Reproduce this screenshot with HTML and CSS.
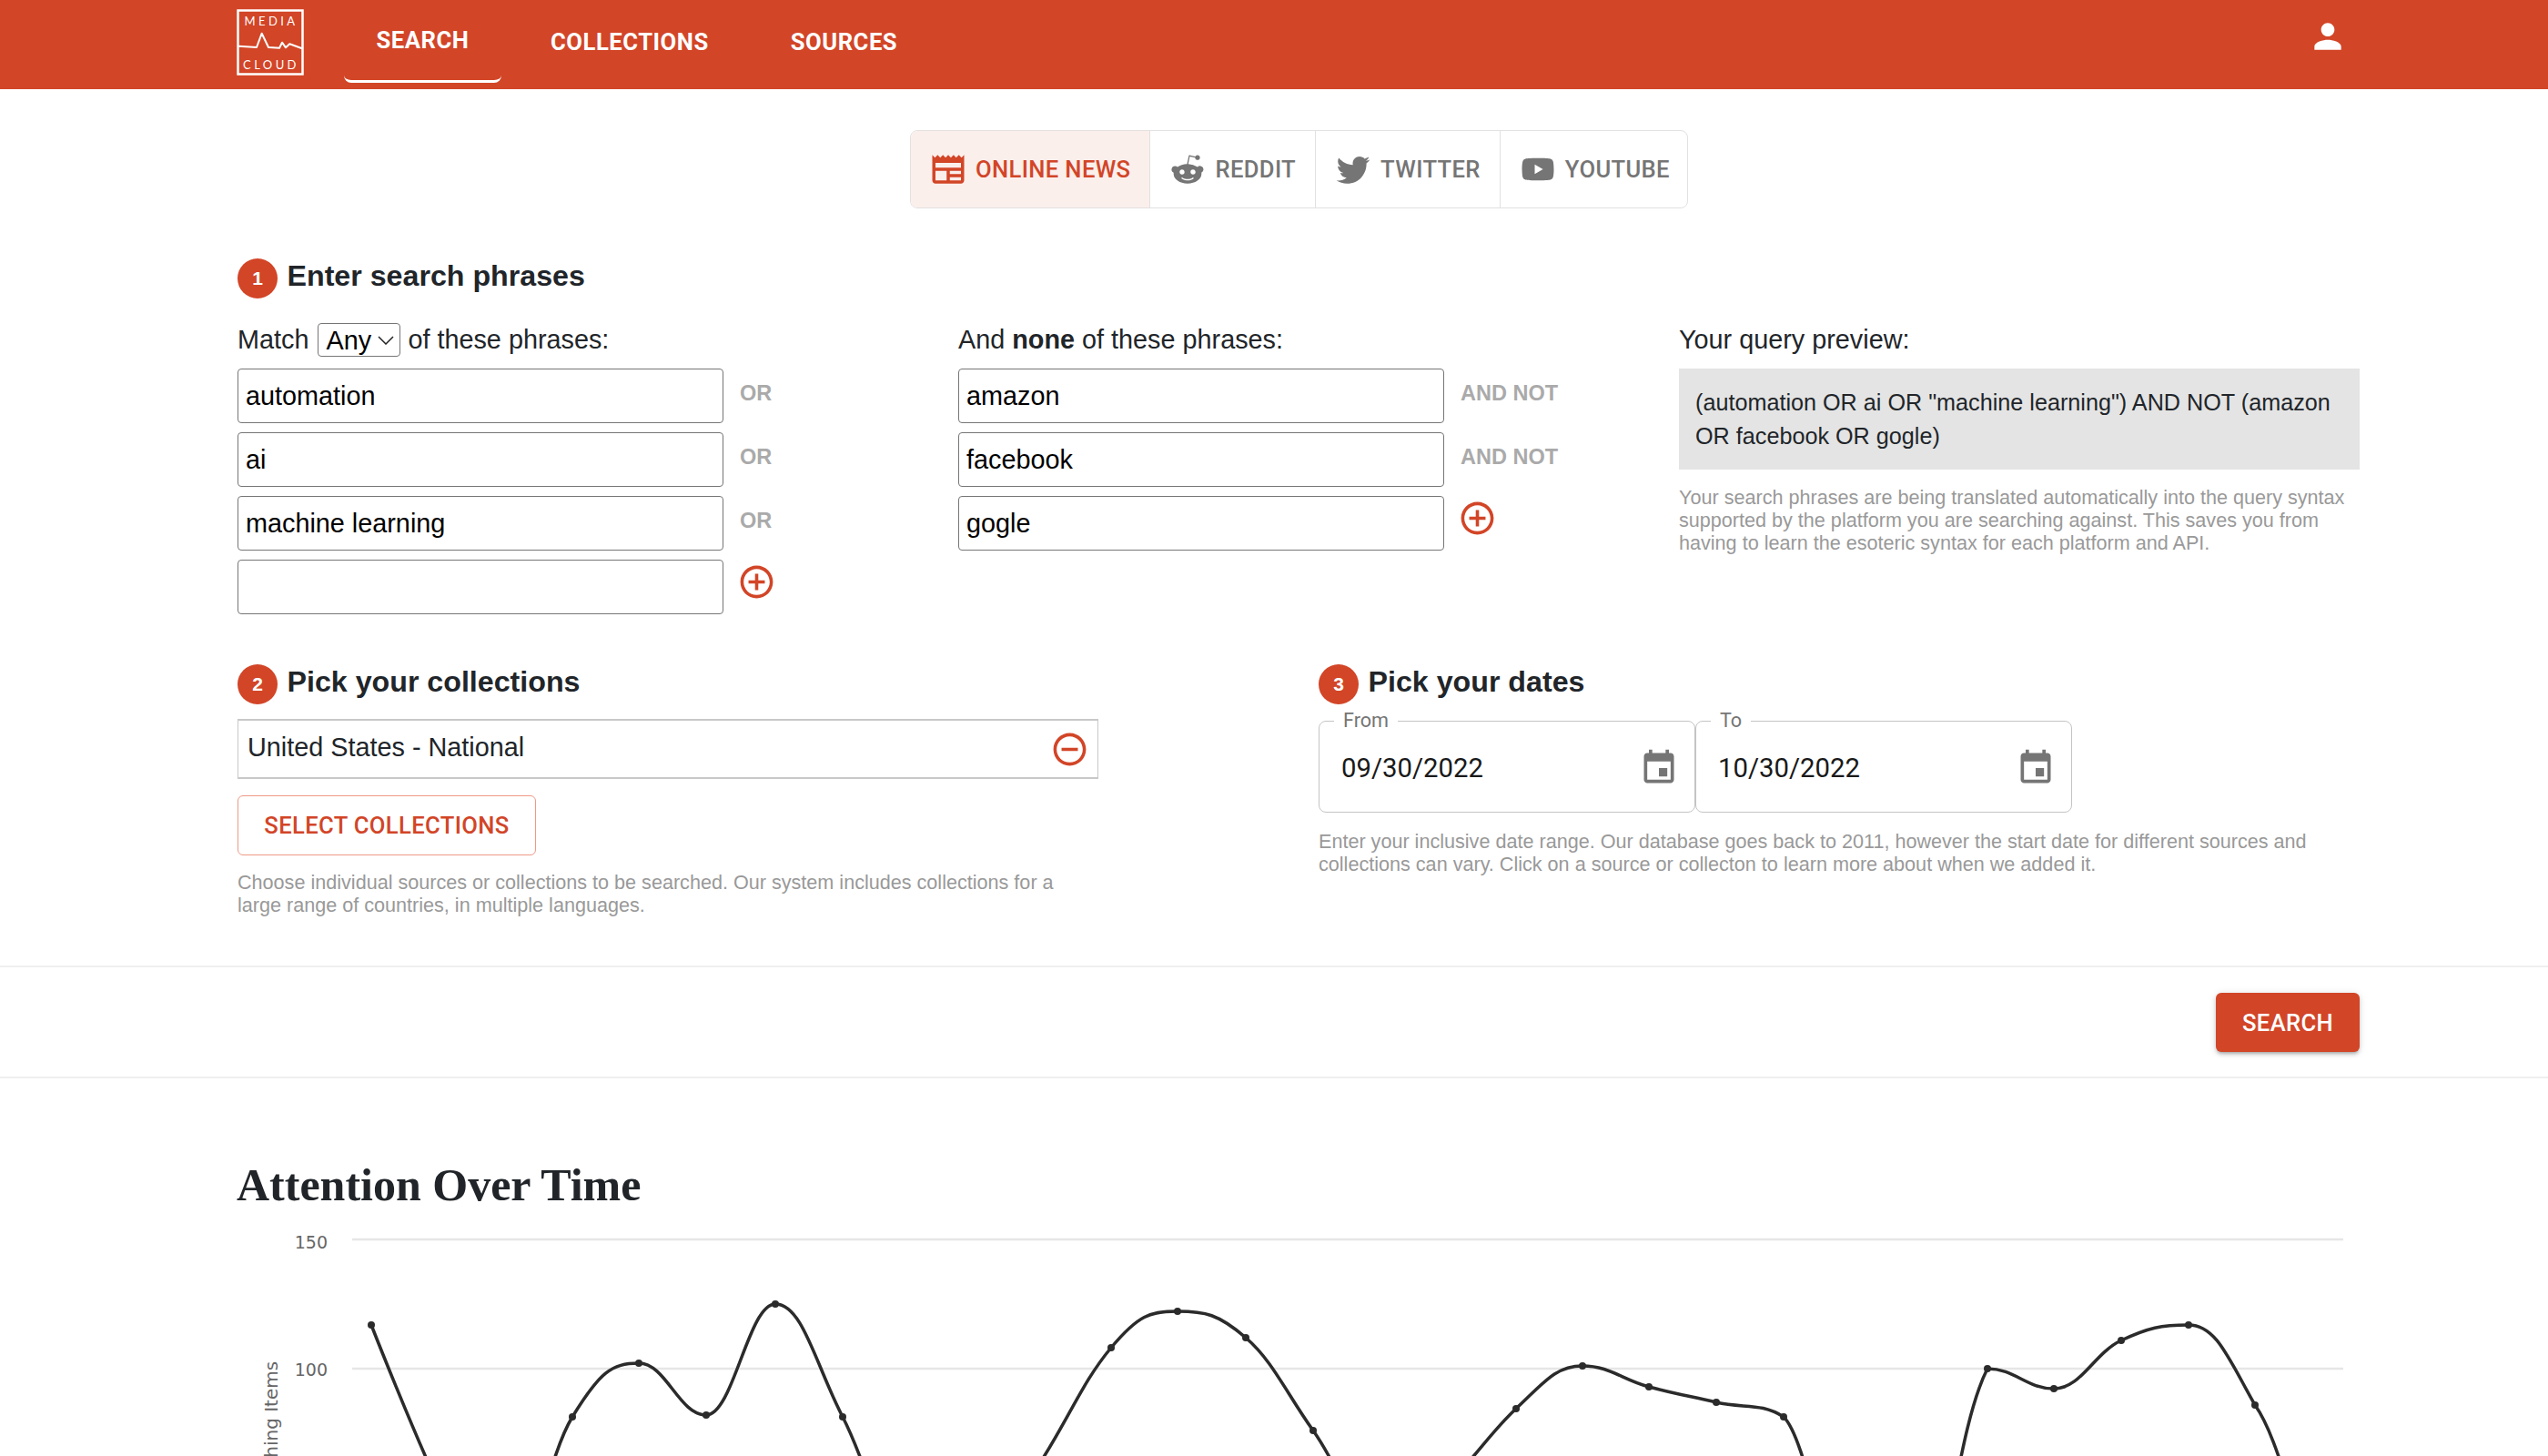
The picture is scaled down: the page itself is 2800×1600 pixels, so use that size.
FILE: index.html
```html
<!DOCTYPE html>
<html lang="en">
<head>
<meta charset="utf-8">
<title>Media Cloud Search</title>
<link rel="stylesheet" href="styles.css">
</head>
<body>
<header class="topbar">
  <svg class="logo" viewBox="0 0 74 73" aria-label="Media Cloud">
    <rect x="1.5" y="1.5" width="71" height="70" class="logo-box"/>
    <path d="M2 40.7 22 42 27.7 26.7 35 42 47 42.700 50 36.700 54 42.300 58.300 38.300 72 43.300" class="logo-line"/>
    <text x="38" y="18" class="logo-text">MEDIA</text>
    <text x="38" y="66" class="logo-text">CLOUD</text>
  </svg>
  <nav class="mainnav">
    <a class="navtab navtab-active">SEARCH</a>
    <a class="navtab">COLLECTIONS</a>
    <a class="navtab">SOURCES</a>
  </nav>
  <svg class="person" viewBox="0 0 24 24"><path d="M12 12c2.210 0 4-1.790 4-4s-1.790-4-4-4-4 1.790-4 4 1.790 4 4 4zm0 2c-2.670 0-8 1.340-8 4v2h16v-2c0-2.660-5.330-4-8-4z"/></svg>
</header>

<main class="page">
  <div class="platforms">
    <a class="platform platform-active">
      <svg class="platform-icon" viewBox="0 0 24 24"><path d="m22 3-1.670 1.670L18.670 3 17 4.670 15.330 3l-1.660 1.670L12 3l-1.670 1.670L8.670 3 7 4.670 5.330 3 3.670 4.670 2 3v16c0 1.100.9 2 2 2h16c1.100 0 2-.9 2-2V3zM11 19H4v-6h7v6zm9 0h-7v-2h7v2zm0-4h-7v-2h7v2zm0-4H4V8h16v3z"/></svg>
      ONLINE NEWS
    </a>
    <a class="platform">
      <svg class="platform-icon" viewBox="0 0 24 24"><path d="M22 12.140a2.190 2.190 0 0 0-3.710-1.570 10.930 10.930 0 0 0-5.860-1.870l1-4.700 3.270.71a1.560 1.560 0 1 0 .16-.76l-3.640-.77c-.11-.02-.22 0-.29.06-.09.05-.14.14-.16.26l-1.110 5.220c-2.330.07-4.430.78-5.950 1.860A2.200 2.200 0 0 0 4.190 10a2.160 2.160 0 0 0-.9 4.150 3.600 3.600 0 0 0-.05.66c0 3.370 3.920 6.120 8.760 6.120s8.760-2.730 8.760-6.120c0-.21-.01-.44-.05-.66A2.210 2.210 0 0 0 22 12.140M7 13.700c0-.86.68-1.560 1.540-1.560s1.560.69 1.560 1.560a1.560 1.560 0 0 1-1.560 1.560c-.86.02-1.540-.7-1.540-1.560m8.710 4.140C14.630 18.920 12.590 19 12 19c-.61 0-2.650-.1-3.710-1.160a.4.4 0 0 1 0-.57.4.4 0 0 1 .57 0c.68.68 2.140.91 3.140.91s2.470-.23 3.140-.91a.4.4 0 0 1 .57 0c.14.17.14.41 0 .57m-.29-2.560c-.86 0-1.560-.7-1.560-1.560a1.560 1.560 0 0 1 1.560-1.560c.86 0 1.580.7 1.580 1.560a1.600 1.600 0 0 1-1.580 1.560z"/></svg>
      REDDIT
    </a>
    <a class="platform">
      <svg class="platform-icon" viewBox="0 0 24 24"><path d="M22.460 6c-.77.35-1.600.58-2.460.69.88-.53 1.560-1.370 1.880-2.380-.83.5-1.750.85-2.720 1.050C18.370 4.500 17.260 4 16 4c-2.350 0-4.270 1.920-4.270 4.290 0 .34.04.67.11.98C8.280 9.090 5.110 7.380 3 4.790c-.37.63-.58 1.370-.58 2.150 0 1.490.75 2.810 1.910 3.560-.71 0-1.370-.2-1.950-.5v.03c0 2.080 1.480 3.820 3.440 4.210a4.220 4.220 0 0 1-1.930.07 4.280 4.280 0 0 0 4 2.980 8.521 8.521 0 0 1-5.330 1.840c-.34 0-.68-.02-1.020-.06C3.440 20.290 5.700 21 8.120 21 16 21 20.330 14.460 20.330 8.790c0-.19 0-.37-.01-.56.84-.6 1.560-1.360 2.140-2.230z"/></svg>
      TWITTER
    </a>
    <a class="platform">
      <svg class="platform-icon" viewBox="0 0 24 24"><path d="M10 15l5.190-3L10 9v6m11.560-7.830c.13.47.22 1.100.28 1.900.07.8.1 1.490.1 2.090L22 12c0 2.190-.16 3.800-.44 4.830-.25.9-.83 1.480-1.730 1.730-.47.13-1.330.22-2.650.28-1.300.07-2.490.1-3.590.1L12 19c-4.190 0-6.800-.16-7.830-.44-.9-.25-1.480-.83-1.730-1.730-.13-.47-.22-1.100-.28-1.900-.07-.8-.1-1.490-.1-2.090L2 12c0-2.190.16-3.800.44-4.830.25-.9.83-1.480 1.730-1.730.47-.13 1.330-.22 2.650-.28 1.300-.07 2.490-.1 3.590-.1L12 5c4.190 0 6.800.16 7.830.44.9.25 1.480.83 1.730 1.730z"/></svg>
      YOUTUBE
    </a>
  </div>

  <section class="phrases-section">
    <h2 class="step"><span class="badge">1</span>Enter search phrases</h2>
    <div class="phrase-grid">
      <div>
        <div class="col-label">Match
          <select class="match-select"><option>Any</option></select>
          of these phrases:</div>
        <div class="phrase-row"><input class="phrase-input" value="automation"><span class="joiner">OR</span></div>
        <div class="phrase-row"><input class="phrase-input" value="ai"><span class="joiner">OR</span></div>
        <div class="phrase-row"><input class="phrase-input" value="machine learning"><span class="joiner">OR</span></div>
        <div class="phrase-row"><input class="phrase-input" value=""><svg class="add-icon" viewBox="0 0 24 24"><path d="M13 7h-2v4H7v2h4v4h2v-4h4v-2h-4V7zm-1-5C6.480 2 2 6.480 2 12s4.480 10 10 10 10-4.480 10-10S17.520 2 12 2zm0 18c-4.410 0-8-3.590-8-8s3.590-8 8-8 8 3.590 8 8-3.590 8-8 8z"/></svg></div>
      </div>
      <div>
        <div class="col-label">And <b>none</b> of these phrases:</div>
        <div class="phrase-row"><input class="phrase-input" value="amazon"><span class="joiner">AND NOT</span></div>
        <div class="phrase-row"><input class="phrase-input" value="facebook"><span class="joiner">AND NOT</span></div>
        <div class="phrase-row"><input class="phrase-input" value="gogle"><svg class="add-icon" viewBox="0 0 24 24"><path d="M13 7h-2v4H7v2h4v4h2v-4h4v-2h-4V7zm-1-5C6.480 2 2 6.480 2 12s4.480 10 10 10 10-4.480 10-10S17.520 2 12 2zm0 18c-4.410 0-8-3.590-8-8s3.590-8 8-8 8 3.590 8 8-3.590 8-8 8z"/></svg></div>
      </div>
      <div>
        <div class="col-label">Your query preview:</div>
        <div class="preview">(automation OR ai OR "machine learning") AND NOT (amazon OR facebook OR gogle)</div>
        <p class="help help-preview">Your search phrases are being translated automatically into the query syntax supported by the platform you are searching against. This saves you from having to learn the esoteric syntax for each platform and API.</p>
      </div>
    </div>
  </section>

  <section class="pick-grid">
    <div>
      <h2 class="step"><span class="badge">2</span>Pick your collections</h2>
      <div class="collection-row">
        <span>United States - National</span>
        <svg class="remove-icon" viewBox="0 0 24 24"><path d="M7 11v2h10v-2H7zm5-9C6.480 2 2 6.480 2 12s4.480 10 10 10 10-4.480 10-10S17.520 2 12 2zm0 18c-4.410 0-8-3.590-8-8s3.590-8 8-8 8 3.590 8 8-3.590 8-8 8z"/></svg>
      </div>
      <button class="btn-outline">SELECT COLLECTIONS</button>
      <p class="help help-collections">Choose individual sources or collections to be searched. Our system includes collections for a large range of countries, in multiple languages.</p>
    </div>
    <div>
      <h2 class="step"><span class="badge">3</span>Pick your dates</h2>
      <div class="date-row">
        <fieldset class="date-field">
          <legend>From</legend>
          <span>09/30/2022</span>
          <svg class="cal-icon" viewBox="0 0 24 24"><path d="M17 12h-5v5h5v-5zM16 1v2H8V1H6v2H5c-1.110 0-1.990.9-1.990 2L3 19c0 1.100.89 2 2 2h14c1.100 0 2-.9 2-2V5c0-1.100-.9-2-2-2h-1V1h-2zm3 18H5V8h14v11z"/></svg>
        </fieldset>
        <fieldset class="date-field">
          <legend>To</legend>
          <span>10/30/2022</span>
          <svg class="cal-icon" viewBox="0 0 24 24"><path d="M17 12h-5v5h5v-5zM16 1v2H8V1H6v2H5c-1.110 0-1.990.9-1.990 2L3 19c0 1.100.89 2 2 2h14c1.100 0 2-.9 2-2V5c0-1.100-.9-2-2-2h-1V1h-2zm3 18H5V8h14v11z"/></svg>
        </fieldset>
      </div>
      <p class="help help-dates">Enter your inclusive date range. Our database goes back to 2011, however the start date for different sources and collections can vary. Click on a source or collecton to learn more about when we added it.</p>
    </div>
  </section>
</main>

<div class="actionbar">
  <button class="btn-search">SEARCH</button>
</div>

<section class="results">
  <h1 class="results-title">Attention Over Time</h1>
  <svg class="chart" viewBox="260 1340 2340 260">
    <line x1="387" y1="1361" x2="2575" y2="1361" class="grid"/>
    <line x1="387" y1="1503" x2="2575" y2="1503" class="grid"/>
    <text x="360" y="1371" class="tick">150</text>
    <text x="360" y="1511" class="tick">100</text>
    <text x="0" y="0" class="axis-title" transform="translate(305 1572) rotate(-90)">Matching Items</text>
    <path class="series" d="M408 1455C408 1455 455 1575 486 1640C516 1697 525 1757 555 1740C585 1723 599 1605 629 1556C659 1507 672 1497 702 1497C732 1497 746 1554 776 1554C806 1554 822 1432 852 1432C882 1432 896 1498 926 1556C956 1614 969 1687 999 1720C1029 1753 1043 1740 1073 1720C1103 1700 1117 1648 1147 1600C1177 1552 1191 1516 1221 1480C1251 1444 1264 1440 1294 1440C1324 1440 1339 1443 1369 1469C1399 1495 1413 1529 1443 1571C1473 1613 1487 1666 1517 1680C1547 1694 1560 1657 1590 1630C1620 1603 1636 1575 1666 1547C1696 1519 1709 1500 1739 1500C1769 1500 1782 1515 1812 1523C1842 1531 1856 1533 1886 1540C1916 1547 1935 1540 1960 1556C1985 1580 2005 1716 2033 1760C2063 1804 2080 1831 2110 1780C2140 1729 2150 1570 2184 1503C2214 1503 2227 1525 2257 1525C2287 1525 2301 1486 2331 1472C2361 1458 2375 1455 2405 1455C2435 1455 2448 1490 2478 1543C2508 1585 2525 1690 2552 1720"/>
    <g class="dots">
      <circle cx="408" cy="1455" r="4"/><circle cx="629" cy="1556" r="4"/><circle cx="702" cy="1497" r="4"/><circle cx="776" cy="1554" r="4"/><circle cx="852" cy="1432" r="4"/><circle cx="926" cy="1556" r="4"/><circle cx="1221" cy="1480" r="4"/><circle cx="1294" cy="1440" r="4"/><circle cx="1369" cy="1469" r="4"/><circle cx="1443" cy="1571" r="4"/><circle cx="1666" cy="1547" r="4"/><circle cx="1739" cy="1500" r="4"/><circle cx="1812" cy="1523" r="4"/><circle cx="1886" cy="1540" r="4"/><circle cx="1960" cy="1556" r="4"/><circle cx="2184" cy="1503" r="4"/><circle cx="2257" cy="1525" r="4"/><circle cx="2331" cy="1472" r="4"/><circle cx="2405" cy="1455" r="4"/><circle cx="2478" cy="1543" r="4"/>
    </g>
  </svg>
</section>
</body>
</html>
```
FILE: styles.css
```css
* { box-sizing: border-box; }
html, body { margin: 0; height: 1600px; overflow: hidden; background: #fff; }
body { font-family: "Liberation Sans", Arial, sans-serif; font-size: 28.8px; color: #212529; }

.topbar { height: 98px; background: #d24527; display: flex; padding: 0 207px 0 260px; position: relative; }
.logo { width: 74px; height: 73px; margin-top: 10px; flex: none; }
.logo-box { fill: none; stroke: #fff; stroke-width: 2.500; }
.logo-line { fill: none; stroke: #fff; stroke-width: 2; stroke-linejoin: round; }
.logo-text { fill: #fff; font-family: "Lato", sans-serif; font-size: 13px; font-weight: 400; letter-spacing: 3.400px; text-anchor: middle; }
.mainnav { display: flex; margin-left: 44px; }
.navtab { height: 91px; display: flex; align-items: center; justify-content: center; padding: 0 36px; margin-left: 18px; font-family: Roboto, sans-serif; font-weight: 700; font-size: 25.600px; letter-spacing: 0.55px; color: #fff; }
.navtab-active { width: 173px; padding: 0; margin-left: 0; border-bottom: 3px solid #fff; border-radius: 0 0 8px 8px; }
.person { width: 44px; height: 44px; fill: #fff; position: absolute; left: 2536px; top: 18px; }

.page { padding: 0 207px 0 261px; }
.platforms { display: flex; width: 855px; height: 86px; margin: 45px 0 0 739px; border: 1.500px solid #e3e0e0; border-radius: 8px; overflow: hidden; }
.platform { display: flex; flex: none; align-items: center; gap: 9px; padding: 0 21px 0 20px; font-family: Roboto, sans-serif; font-weight: 500; font-size: 25.600px; letter-spacing: 0.36px; color: #757575; white-space: nowrap; border-left: 1.500px solid #e3e0e0; }
.platform:first-child { border-left: 0; }
.platform:last-child { flex: 1; }
.platform-active { background: #fbefec; color: #d24527; }
.platform-icon { width: 42px; height: 42px; fill: currentColor; flex: none; }

.phrases-section { margin-top: 55px; }
.step { display: flex; align-items: flex-start; margin: 0; height: 43px; font-size: 32.200px; font-weight: 700; line-height: 38px; color: #212529; }
.badge { width: 44px; height: 44px; border-radius: 50%; background: #d24527; color: #fff; font-size: 21px; font-weight: 700; display: flex; align-items: center; justify-content: center; margin-right: 10.500px; flex: none; }
.phrase-grid { display: grid; grid-template-columns: 792px 792px 748px; margin-top: 28px; }
.col-label { height: 37px; line-height: 37px; margin-bottom: 13px; }
.match-select { appearance: none; width: 91px; height: 37px; padding: 0 0 0 8px; font: 28.800px "Liberation Sans", Arial, sans-serif; margin: 0 0 0 2px; color: #000; border: 1.500px solid #767676; border-radius: 4px; vertical-align: top; background: #fff url("data:image/svg+xml,%3Csvg xmlns='http://www.w3.org/2000/svg' width='18' height='10'%3E%3Cpath d='M1 1l8 8 8-8' fill='none' stroke='%23222' stroke-width='1.500'/%3E%3C/svg%3E") no-repeat right 6px center; }
.phrase-row { display: flex; height: 60px; margin-bottom: 10px; align-items: flex-start; }
.phrase-input { width: 534px; height: 60px; padding: 0 8px; font: 28.800px "Liberation Sans", Arial, sans-serif; color: #000; background: #fff; border: 1.500px solid #767676; border-radius: 4px; flex: none; }
.joiner { margin: 15px 0 0 18px; font-size: 23.500px; font-weight: 700; line-height: 24px; color: #aaa; white-space: nowrap; }
.add-icon { width: 43px; height: 43px; margin: 3px 0 0 15px; fill: #d24527; flex: none; }
.preview { height: 111px; padding: 19px 18px 0; background: #e4e4e4; font-size: 25.200px; line-height: 36.500px; }
.help { margin: 0; font-size: 21.600px; line-height: 25px; color: #999; }
.help-preview { margin-top: 18px; }

.pick-grid { display: grid; grid-template-columns: 1188px 1144px; margin-top: 45px; }
.collection-row { display: flex; align-items: center; justify-content: space-between; height: 66px; width: 946px; margin-top: 17px; padding: 0 9px 0 10px; border: 2px solid #c8c8c8; border-width: 2px 1px; line-height: 60px; }
.collection-row span { margin-top: -4px; }
.remove-icon { width: 43px; height: 43px; fill: #d24527; }
.btn-outline { display: block; width: 328px; height: 66px; margin-top: 18px; background: #fff; border: 1.500px solid #ee9a87; border-radius: 6px; color: #d24527; font-family: Roboto, sans-serif; font-weight: 500; font-size: 25.600px; letter-spacing: 0.36px; padding: 0; }
.help-collections { margin-top: 17px; width: 930px; }
.date-row { display: flex; margin-top: 7px; }
.date-field { width: 414px; height: 113px; margin: 0; padding: 0 17px 8px 24px; border: 1.500px solid #c4c4c4; border-radius: 8px; display: flex; align-items: center; justify-content: space-between; font-family: Roboto, sans-serif; font-size: 29.300px; color: #1a1a1a; }
.date-field legend { font-size: 21.600px; line-height: 24px; padding: 0 10px; margin-left: -8px; color: #757575; }
.cal-icon { width: 44px; height: 44px; fill: #757575; }
.help-dates { margin-top: 19px; width: 1144px; }

.actionbar { display: flex; justify-content: flex-end; height: 124px; padding: 28px 207px 0 0; margin-top: 54px; border-top: 2px solid #efefef; border-bottom: 2px solid #efefef; }
.btn-search { width: 158px; height: 65px; background: #d24527; color: #fff; border: 0; border-radius: 6px; box-shadow: 0 3px 3px -2px rgba(0,0,0,.2), 0 3px 4px rgba(0,0,0,.14), 0 1px 8px rgba(0,0,0,.12); font-family: Roboto, sans-serif; font-weight: 500; font-size: 25.600px; letter-spacing: 0.36px; }

.results { padding: 0 207px 0 260px; }
.results-title { margin: 0; height: 155.500px; padding-top: 84px; font-family: "Liberation Serif", serif; font-size: 50px; font-weight: 700; line-height: 66px; color: #212529; }
.chart { display: block; width: 2340px; height: 260px; }
.grid { stroke: #e6e6e6; stroke-width: 2.500; }
.tick { font-family: "DejaVu Sans", sans-serif; font-size: 19px; fill: #666; text-anchor: end; }
.axis-title { font-family: "DejaVu Sans", sans-serif; font-size: 20px; fill: #666; text-anchor: middle; }
.series { fill: none; stroke: #2b2b2b; stroke-width: 3.500; }
.dots { fill: #2b2b2b; }
```
